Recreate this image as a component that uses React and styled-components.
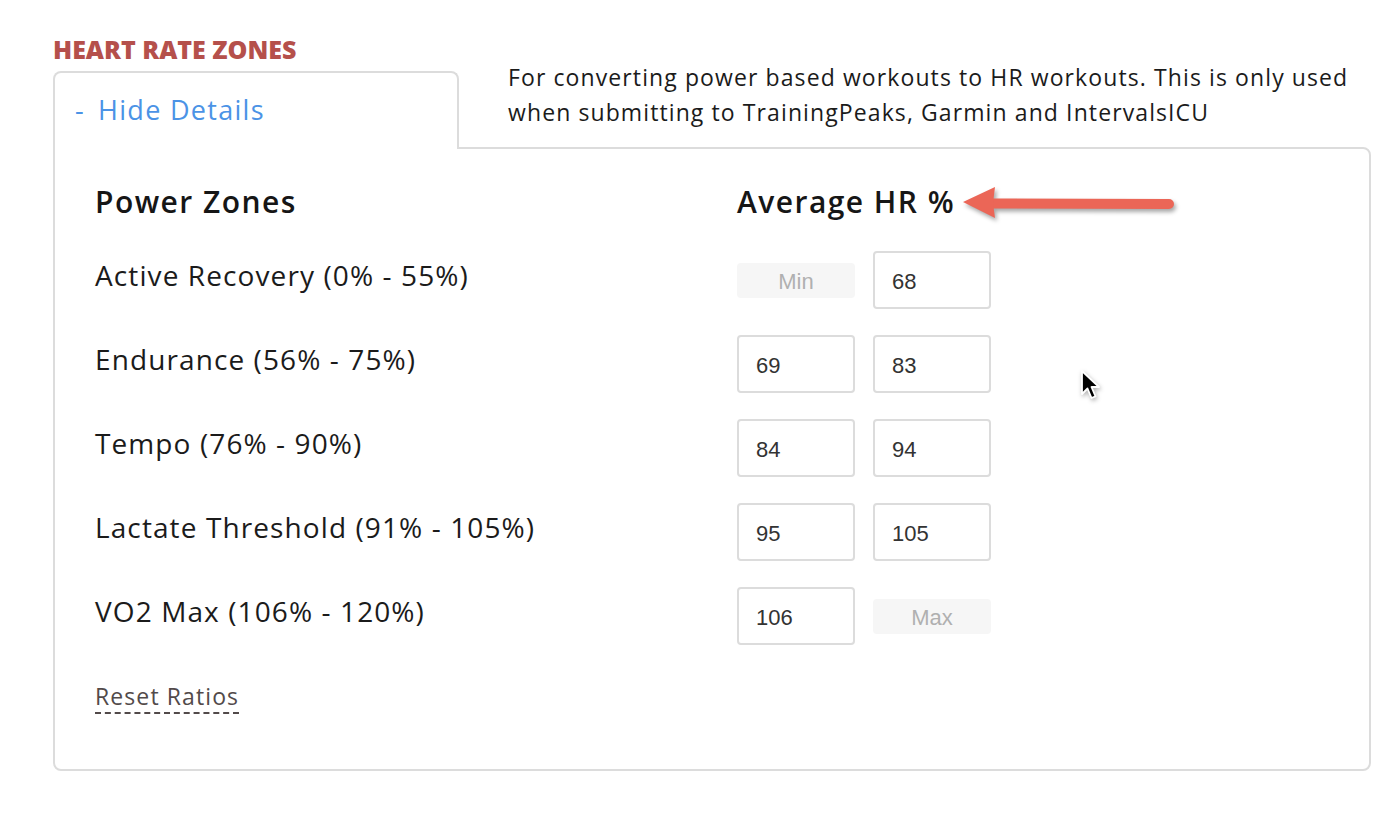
import React from "react";
import styled, { createGlobalStyle } from "styled-components";

const Global = createGlobalStyle`
  html, body { margin: 0; padding: 0; background: #ffffff; }
  body { font-family: "Open Sans", "Noto Sans", sans-serif; color: #1b1b1b; }
`;

const Page = styled.div`
  width: 1318px;
  padding: 35px 27px 40px 53px;
`;

const SectionTitle = styled.h2`
  margin: 0 0 8px 0;
  font-family: "Open Sans", sans-serif;
  font-size: 25px;
  line-height: 28px;
  font-weight: 800;
  color: #b5504b;
  letter-spacing: 0px;
`;

const Header = styled.div`
  display: flex;
  align-items: flex-start;
`;

const Tab = styled.div`
  position: relative;
  z-index: 1;
  width: 406px;
  height: 78px;
  margin-bottom: -2px;
  padding: 0 0 0 20px;
  box-sizing: border-box;
  border: 2px solid #dcdcdc;
  border-bottom: none;
  border-radius: 8px 8px 0 0;
  background: #ffffff;
  display: flex;
  align-items: flex-start;
`;

const ToggleLink = styled.a`
  margin-top: 19px;
  font-size: 27px;
  line-height: 36px;
  letter-spacing: 1.3px;
  color: #4b93e6;
  cursor: pointer;
  display: flex;
  gap: 13px;
`;

const Description = styled.p`
  margin: -11px 0 0 49px;
  font-size: 23px;
  line-height: 35px;
  letter-spacing: 1.1px;
  color: #1b1b1b;
`;

const Line = styled.span`
  display: block;
  white-space: nowrap;
`;

const Panel = styled.div`
  position: relative;
  border: 2px solid #dcdcdc;
  border-radius: 0 8px 8px 8px;
  padding: 35px 40px 55px 40px;
`;

const Grid = styled.div`
  display: grid;
  grid-template-columns: 642px auto;
`;

const ColumnHeading = styled.h3`
  margin: 0 0 31px 0;
  font-size: 30px;
  line-height: 36px;
  font-weight: 600;
  letter-spacing: 1.45px;
  color: #161616;
`;

const ZoneLabel = styled.div`
  font-size: 28px;
  line-height: 48px;
  letter-spacing: 1.1px;
  color: #1b1b1b;
  height: 58px;
  margin-bottom: 26px;
  white-space: nowrap;
`;

const InputPair = styled.div`
  display: flex;
  align-items: center;
  gap: 18px;
  height: 58px;
  margin-bottom: 26px;
`;

const NumberBox = styled.div`
  width: 118px;
  height: 58px;
  box-sizing: border-box;
  border: 2px solid #dcdcdc;
  border-radius: 4px;
  padding: 3px 0 0 17px;
  display: flex;
  align-items: center;
  font-family: "Liberation Sans", Arial, sans-serif;
  font-size: 22px;
  color: #333333;
`;

const FixedBox = styled.div`
  width: 118px;
  height: 35px;
  box-sizing: border-box;
  padding-top: 3px;
  border-radius: 4px;
  background: #f6f6f6;
  display: flex;
  align-items: center;
  justify-content: center;
  font-family: "Liberation Sans", Arial, sans-serif;
  font-size: 22px;
  color: #b0b0b0;
`;

const ResetLink = styled.a`
  display: inline-block;
  margin-top: 11px;
  font-size: 23px;
  line-height: 28px;
  letter-spacing: 1.1px;
  color: #524a4a;
  border-bottom: 2px dashed #524a4a;
  padding-bottom: 2px;
  cursor: pointer;
`;

const Annotation = styled.svg`
  position: absolute;
  left: 900px;
  top: 30px;
  overflow: visible;
  filter: drop-shadow(2px 3px 2px rgba(0, 0, 0, 0.35));
`;

const Pointer = styled.svg`
  position: absolute;
  left: 1026px;
  top: 221px;
  overflow: visible;
  filter: drop-shadow(1px 2px 2px rgba(0, 0, 0, 0.3));
`;

const zones = [
  { label: "Active Recovery (0% - 55%)", min: null, max: "68" },
  { label: "Endurance (56% - 75%)", min: "69", max: "83" },
  { label: "Tempo (76% - 90%)", min: "84", max: "94" },
  { label: "Lactate Threshold (91% - 105%)", min: "95", max: "105" },
  { label: "VO2 Max (106% - 120%)", min: "106", max: null },
];

export default function App() {
  return (
    <>
      <Global />
      <Page>
        <SectionTitle>HEART RATE ZONES</SectionTitle>
        <Header>
          <Tab>
            <ToggleLink>
              <span>-</span>
              <span>Hide Details</span>
            </ToggleLink>
          </Tab>
          <Description>
            <Line>For converting power based workouts to HR workouts. This is only used</Line>
            <Line>when submitting to TrainingPeaks, Garmin and IntervalsICU</Line>
          </Description>
        </Header>
        <Panel>
          <Grid>
            <ColumnHeading>Power Zones</ColumnHeading>
            <ColumnHeading>Average HR %</ColumnHeading>
            {zones.map((z) => (
              <React.Fragment key={z.label}>
                <ZoneLabel>{z.label}</ZoneLabel>
                <InputPair>
                  {z.min === null ? <FixedBox>Min</FixedBox> : <NumberBox>{z.min}</NumberBox>}
                  {z.max === null ? <FixedBox>Max</FixedBox> : <NumberBox>{z.max}</NumberBox>}
                </InputPair>
              </React.Fragment>
            ))}
          </Grid>
          <ResetLink>Reset Ratios</ResetLink>
          <Annotation width="225" height="50" viewBox="0 0 225 50">
            <line x1="36" y1="24.5" x2="214" y2="25" stroke="#eb6657" strokeWidth="10" strokeLinecap="round" />
            <polygon points="8,23 40,8 38,24 40,39" fill="#eb6657" />
          </Annotation>
          <Pointer width="24" height="34" viewBox="0 0 24 34">
            <path d="M1 1 L1 24 L6.5 18.5 L10.5 28 L14.5 26.3 L10.5 17 L18 17 Z" fill="#000" stroke="#fff" strokeWidth="1.8" strokeLinejoin="round" />
          </Pointer>
        </Panel>
      </Page>
    </>
  );
}
